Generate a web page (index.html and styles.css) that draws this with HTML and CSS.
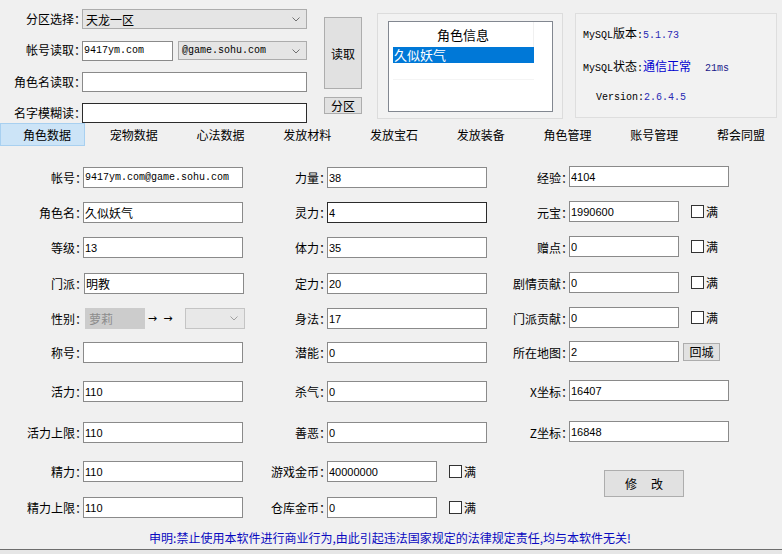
FILE: index.html
```html
<!DOCTYPE html>
<html lang="zh-CN">
<head>
    <meta charset="UTF-8">
    <title>角色数据</title>
    <link rel="stylesheet" href="styles.css">
</head>
<body>
<div class="app">
    <div class="top">
        <div class="read-form">
            <label class="lbl">分区选择：</label>
            <div class="combo zone-combo">天龙一区
                <svg class="chev" width="8" height="5" viewBox="0 0 8 5"><polyline points="0.5,0.5 4,4 7.5,0.5" fill="none" stroke="#707070"/></svg>
            </div>
            <label class="lbl">帐号读取：</label>
            <div class="pair">
                <input class="tb mono acct" value="9417ym.com">
                <div class="combo mail mono">@game.sohu.com
                    <svg class="chev" width="8" height="5" viewBox="0 0 8 5"><polyline points="0.5,0.5 4,4 7.5,0.5" fill="none" stroke="#707070"/></svg>
                </div>
            </div>
            <label class="lbl">角色名读取：</label>
            <input class="tb wide">
            <label class="lbl">名字模糊读：</label>
            <input class="tb wide dark">
        </div>

        <div class="read-buttons">
            <button class="btn read-btn">读取</button>
            <button class="btn zone-btn">分区</button>
        </div>

        <div class="role-group">
            <div class="role-list">
                <div class="list-head">角色信息</div>
                <div class="list-row selected">久似妖气</div>
                <div class="list-row"></div>
                <div class="list-row alt"></div>
                <div class="list-row"></div>
            </div>
        </div>

        <div class="status">
            <p>MySQL<span class="cn">版本</span>:<span class="val">5.1.73</span></p>
            <p>MySQL<span class="cn">状态</span>:<span class="cn ok">通信正常</span><span class="ping">21ms</span></p>
            <p class="indent">Version:<span class="val">2.6.4.5</span></p>
        </div>
    </div>

    <div class="tabs">
        <div class="tab active">角色数据</div>
        <div class="tab">宠物数据</div>
        <div class="tab">心法数据</div>
        <div class="tab">发放材料</div>
        <div class="tab">发放宝石</div>
        <div class="tab">发放装备</div>
        <div class="tab">角色管理</div>
        <div class="tab">账号管理</div>
        <div class="tab">帮会同盟</div>
    </div>

    <div class="sheet">
        <!-- row 1 -->
        <label class="lbl">帐号：</label>
        <input class="tb mono" value="9417ym.com@game.sohu.com">
        <label class="lbl">力量：</label>
        <input class="tb" value="38">
        <label class="lbl">经验：</label>
        <input class="tb up" value="4104">
        <!-- row 2 -->
        <label class="lbl">角色名：</label>
        <input class="tb cnv" value="久似妖气">
        <label class="lbl">灵力：</label>
        <input class="tb dark" value="4">
        <label class="lbl">元宝：</label>
        <div class="pair up"><input class="tb short" value="1990600"><label class="full"><input type="checkbox" class="chk">满</label></div>
        <!-- row 3 -->
        <label class="lbl">等级：</label>
        <input class="tb" value="13">
        <label class="lbl">体力：</label>
        <input class="tb" value="35">
        <label class="lbl">赠点：</label>
        <div class="pair up"><input class="tb short" value="0"><label class="full"><input type="checkbox" class="chk">满</label></div>
        <!-- row 4 -->
        <label class="lbl">门派：</label>
        <input class="tb cnv shift" value="明教">
        <label class="lbl">定力：</label>
        <input class="tb" value="20">
        <label class="lbl">剧情贡献：</label>
        <div class="pair up"><input class="tb short" value="0"><label class="full"><input type="checkbox" class="chk">满</label></div>
        <!-- row 5 -->
        <label class="lbl">性别：</label>
        <div class="pair sex">
            <div class="combo off">萝莉</div>
            <span class="arrows">→ →</span>
            <div class="combo off light">
                <svg class="chev" width="8" height="5" viewBox="0 0 8 5"><polyline points="0.5,0.5 4,4 7.5,0.5" fill="none" stroke="#a0a0a0"/></svg>
            </div>
        </div>
        <label class="lbl">身法：</label>
        <input class="tb" value="17">
        <label class="lbl">门派贡献：</label>
        <div class="pair up"><input class="tb short" value="0"><label class="full"><input type="checkbox" class="chk">满</label></div>
        <!-- row 6 -->
        <label class="lbl">称号：</label>
        <input class="tb">
        <label class="lbl">潜能：</label>
        <input class="tb" value="0">
        <label class="lbl">所在地图：</label>
        <div class="pair up"><input class="tb short" value="2"><button class="btn town">回城</button></div>
        <!-- row 7 -->
        <label class="lbl">活力：</label>
        <input class="tb" value="110">
        <label class="lbl">杀气：</label>
        <input class="tb" value="0">
        <label class="lbl">X坐标：</label>
        <input class="tb up" value="16407">
        <!-- row 8 -->
        <label class="lbl">活力上限：</label>
        <input class="tb" value="110">
        <label class="lbl">善恶：</label>
        <input class="tb" value="0">
        <label class="lbl">Z坐标：</label>
        <input class="tb up" value="16848">
        <!-- row 9 -->
        <label class="lbl">精力：</label>
        <input class="tb" value="110">
        <label class="lbl">游戏金币：</label>
        <div class="pair"><input class="tb short" value="40000000"><label class="full"><input type="checkbox" class="chk">满</label></div>
        <span></span>
        <div><button class="btn save">修改</button></div>
        <!-- row 10 -->
        <label class="lbl">精力上限：</label>
        <input class="tb" value="110">
        <label class="lbl">仓库金币：</label>
        <div class="pair"><input class="tb short" value="0"><label class="full"><input type="checkbox" class="chk">满</label></div>
    </div>

    <p class="notice">申明:禁止使用本软件进行商业行为,由此引起违法国家规定的法律规定责任,均与本软件无关!</p>
</div>
</body>
</html>
```

FILE: styles.css
```css
* {
    box-sizing: border-box;
    margin: 0;
    padding: 0;
}

html {
    background: #e6e6e6;
}

body {
    font-family: "Noto Sans CJK SC", sans-serif;
    font-size: 12px;
    color: #000;
}

.app {
    width: 782px;
    height: 550px;
    background: #f0f0f0;
    border-bottom: 1px solid #6d6d6d;
    overflow: hidden;
}

/* shared controls */
.lbl {
    justify-self: end;
    line-height: 21px;
    white-space: nowrap;
    margin-right: -4px;
}

.tb {
    display: block;
    width: 160px;
    height: 21px;
    border: 1px solid #8a8a8a;
    background: #fff;
    padding: 0 1px;
    font: 11px "Liberation Sans", "Noto Sans CJK SC", sans-serif;
    color: #000;
    outline: none;
}

.tb.dark {
    border-color: #2b2b2b;
}

.tb.cnv {
    font: 12px "Noto Sans CJK SC", sans-serif;
}

.mono,
.tb.mono {
    font-family: "Liberation Mono", monospace;
    font-size: 10px;
}

.tb.short {
    width: 110px;
}

.combo {
    position: relative;
    display: flex;
    align-items: center;
    height: 20px;
    padding-left: 3px;
    background: #e5e5e5;
    border: 1px solid #acacac;
}

.chev {
    position: absolute;
    right: 6px;
    top: 7px;
}

.btn {
    background: #e1e1e1;
    border: 1px solid #adadad;
    font: 12px "Noto Sans CJK SC", sans-serif;
    color: #000;
}

.pair {
    display: flex;
    align-items: center;
    height: 21px;
}

.full {
    display: flex;
    align-items: center;
    gap: 2px;
    margin-left: 12px;
}

.chk {
    appearance: none;
    width: 13px;
    height: 13px;
    border: 1px solid #333;
    background: #fff;
}

/* top area */
.top {
    display: flex;
    height: 123px;
}

.read-form {
    display: grid;
    grid-template-columns: 82px 225px;
    grid-template-rows: 31px 32px 31px 20px;
    padding-top: 9px;
}

.read-form .lbl {
    line-height: 20px;
}

.read-form .tb {
    height: 20px;
}

.tb.wide {
    width: 225px;
}

.tb.acct {
    width: 91px;
}

.mail {
    width: 129px;
    height: 19px;
    margin-left: 5px;
}

.zone-combo {
    width: 225px;
}

.read-buttons {
    display: flex;
    flex-direction: column;
    width: 38px;
    margin-left: 17px;
}

.read-btn {
    height: 72px;
    margin-top: 17px;
}

.zone-btn {
    height: 17px;
    margin-top: 8px;
    line-height: 14px;
}

.role-group {
    width: 186px;
    height: 106px;
    margin: 13px 0 0 15px;
    padding: 7px 9px 0 10px;
    border: 1px solid #dcdcdc;
    background: #f2f2f2;
}

.role-list {
    height: 91px;
    border: 1px solid #828790;
    background: #fff;
    padding: 0 18px 0 4px;
}

.list-head {
    height: 25px;
    line-height: 25px;
    text-align: center;
    font-size: 13px;
    border-right: 1px solid #f0f0f0;
}

.list-row {
    height: 16px;
    line-height: 16px;
    font-size: 13px;
}

.list-row.selected {
    background: #0078d7;
    color: #fff;
    padding-left: 1px;
}

.list-row.alt {
    border-top: 1px solid #f4f4f4;
}

.status {
    display: flex;
    flex-direction: column;
    gap: 16.5px;
    width: 202px;
    height: 105px;
    margin: 13px 0 0 12px;
    padding: 11px 0 0 7px;
    border: 1px solid #dedede;
    background: #f2f2f2;
    font-family: "Liberation Mono", "Noto Sans CJK SC", monospace;
    font-size: 10px;
}

.status p {
    height: 16px;
    line-height: 16px;
    white-space: nowrap;
}

.status .cn {
    font-family: "Noto Sans CJK SC", sans-serif;
    font-size: 12px;
}

.status .val {
    color: #2a2ab4;
}

.status .ok {
    color: #0000d0;
}

.status .ping {
    color: #1a1a8a;
    margin-left: 14px;
}

.status .indent {
    padding-left: 13px;
}

/* tabs */
.tabs {
    display: flex;
    height: 24px;
    padding-left: 3.6px;
}

.tab {
    position: relative;
    width: 86.75px;
    line-height: 24px;
    text-align: center;
    flex-shrink: 0;
}

.tab.active::before {
    content: "";
    position: absolute;
    left: -4px;
    right: 5px;
    top: 0;
    bottom: 1px;
    background: #cce4f7;
    border: 1px solid #a8d0f0;
    z-index: -1;
}

.tab.active {
    z-index: 0;
}

/* character sheet */
.sheet {
    display: grid;
    grid-template-columns: 83px 162px 82px 161px 81px 1fr;
    grid-template-rows: 35px 35px 36px 35px 34px 39px 41px 39px 36px 21px;
    padding-top: 20px;
}

.sheet .up {
    margin-top: -1px;
}

.sheet .shift {
    margin-left: 1px;
}

.sex {
    margin-left: 2px;
}

.combo.off {
    width: 60px;
    height: 21px;
    background: #cccccc;
    border-color: #cccccc;
    color: #8c8c8c;
}

.combo.off.light {
    background: #e8e8e8;
    border-color: #c4c4c4;
}

.arrows {
    width: 41px;
    padding-left: 3px;
    font-family: "DejaVu Sans", sans-serif;
    font-size: 11px;
    word-spacing: 3px;
}

.town {
    width: 37px;
    height: 18px;
    margin-left: 4px;
    line-height: 14px;
}

.save {
    width: 80px;
    height: 27px;
    margin: 9px 0 0 35px;
    letter-spacing: 14px;
    padding-left: 14px;
}

.notice {
    margin-top: 12px;
    line-height: 16px;
    text-align: center;
    color: #0a0ac0;
    padding-right: 2px;
}
```
